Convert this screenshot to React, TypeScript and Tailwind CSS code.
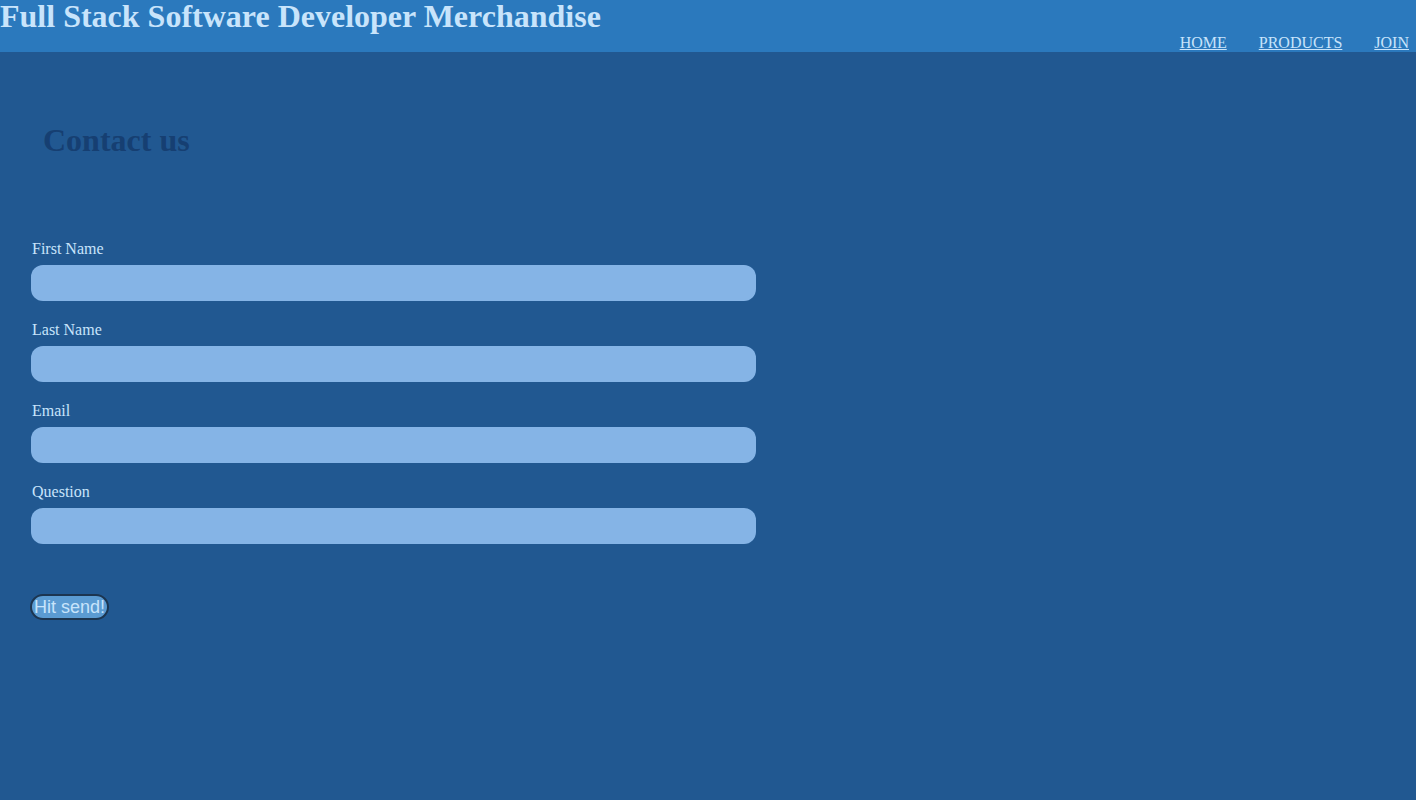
const fields = ['First Name', 'Last Name', 'Email', 'Question']

export default function App() {
  return (
    <div className="min-h-[800px] bg-[#215891] font-['Liberation_Serif',serif] text-[#c8e4fb]">
      <header className="flex h-[52px] items-start justify-between bg-[#2b79bd]">
        <h1 className="m-0 text-[32px] font-bold leading-[32px]">Full Stack Software Developer Merchandise</h1>
        <nav className="flex gap-[32px] self-end pr-[7px] text-[16px] leading-[18px]">
          <a href="#" className="underline">HOME</a>
          <a href="#" className="underline">PRODUCTS</a>
          <a href="#" className="underline">JOIN</a>
        </nav>
      </header>

      <main className="px-[31px]">
        <h2 className="pt-[70px] pl-[12px] text-[32px] font-bold leading-[37px] text-[#163f72]">Contact us</h2>

        <form className="mt-[81px] flex w-[725px] flex-col gap-[20px]">
          {fields.map((label) => (
            <div key={label} className="flex flex-col">
              <label className="pl-[1px] text-[16px] leading-[18px]">{label}</label>
              <input className="mt-[7px] h-[36px] rounded-[12px] bg-[#85b4e6] outline-none" />
            </div>
          ))}
          <div className="mt-[30px]">
            <button
              type="button"
              className="-ml-[1px] rounded-full border-2 border-[#1c3550] bg-[#5b9bd2] px-[2px] font-['Liberation_Sans',sans-serif] text-[18px] leading-[22px] text-[#c8e4fb]"
            >
              Hit send!
            </button>
          </div>
        </form>
      </main>
    </div>
  )
}
